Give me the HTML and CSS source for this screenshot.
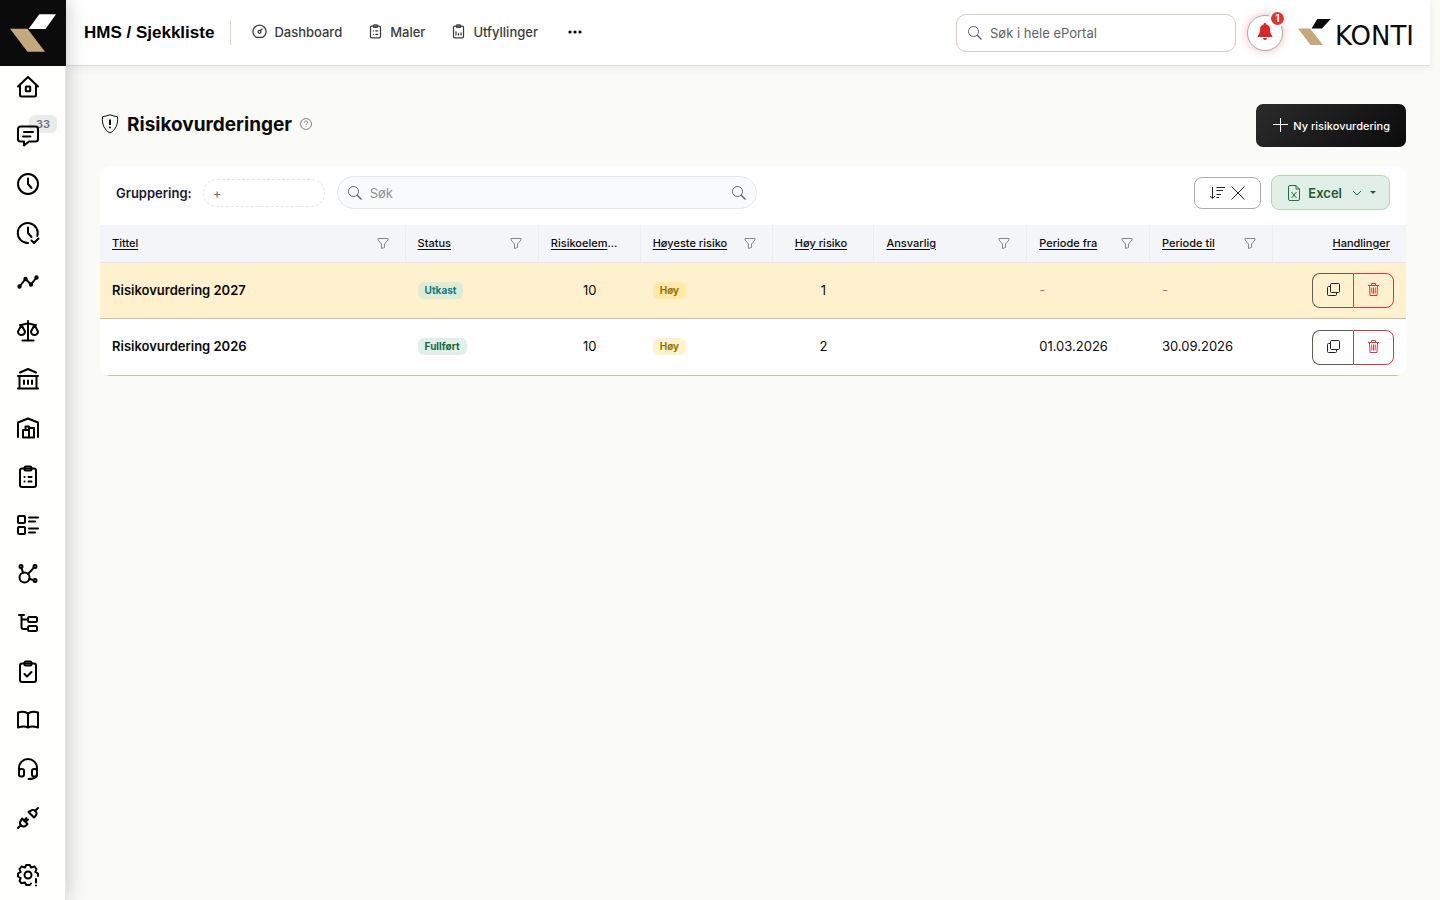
FILE: index.html
```html
<!DOCTYPE html>
<html lang="no">
<head>
  <meta charset="UTF-8">
  <meta name="viewport" content="width=device-width, initial-scale=1">
  <title>Risikovurderinger</title>
  <link rel="stylesheet" href="styles.css">
</head>
<body>
  <!-- shared icons -->
  <svg class="sprite" aria-hidden="true">
    <symbol id="i-search" viewBox="0 0 14 14"><circle cx="5.500" cy="5.500" r="5"/><path d="M9 9l4.500 4.500" stroke-width="1.400"/></symbol>
    <symbol id="i-filter" viewBox="0 0 12 12"><path d="M1 1.500h10v1.500L7.500 7v3.500l-3 1V7L1 3z"/></symbol>
    <symbol id="i-copy" viewBox="0 0 13 13"><rect x="3.500" y=".5" width="9" height="9" rx="1"/><path d="M3.500 3.500h-2a1 1 0 0 0-1 1v7a1 1 0 0 0 1 1h7a1 1 0 0 0 1-1v-2"/></symbol>
    <symbol id="i-trash" viewBox="0 0 13 13"><path d="M1 2.500h11M4.500 2.500v-2h4v2M2.500 2.500l.5 10h7l.5-10M4.700 4.500l.2 6M6.500 4.500v6M8.300 4.500l-.2 6"/></symbol>
    <symbol id="i-clip" viewBox="0 0 24 24"><rect x="4" y="3.500" width="16" height="18.500" rx="2"/><rect x="8.500" y="1.500" width="7" height="4" rx="1.500"/></symbol>
  </svg>

  <aside class="sidebar">
    <a class="brand" href="#" aria-label="Konti">
      <svg viewBox="0 0 66 66"><path fill="#fff" d="M39.300 14.300H56L45.500 29h-17z"/><path fill="#c6a87e" d="M10 28.700h17.500L45 51.700H27.500z"/></svg>
    </a>
    <nav class="side-nav">
      <a href="#" aria-label="Hjem"><svg class="icon" viewBox="0 0 24 24"><path d="M2 11.500 12 2l10 9.500M4 10v10a1.500 1.500 0 0 0 1.500 1.500h13A1.500 1.500 0 0 0 20 20V10"/><rect x="9.800" y="11.500" width="4.400" height="4.800" rx=".5"/></svg></a>
      <a href="#" aria-label="Meldinger"><span class="count">33</span><svg class="icon" viewBox="0 0 24 24"><path d="M4.500 2.500h15A2.500 2.500 0 0 1 22 5v10a2.500 2.500 0 0 1-2.500 2.500H13l-5 4v-4H4.500A2.500 2.500 0 0 1 2 15V5a2.500 2.500 0 0 1 2.500-2.500zM8 8h9M7 12.500h7.500"/></svg></a>
      <a href="#" aria-label="Timer"><svg class="icon" viewBox="0 0 24 24"><circle cx="12" cy="12" r="10"/><path d="M12 6.500V12l3.500 4"/></svg></a>
      <a href="#" aria-label="Godkjenning"><svg class="icon" viewBox="0 0 24 24"><path d="M21.300 15A10 10 0 1 0 12 22M12 6.500V12l3.500 4M15.500 19.500l2.500 2.500 4.500-4.500"/></svg></a>
      <a href="#" aria-label="Statistikk"><svg class="icon" viewBox="0 0 24 24"><path d="M3.500 16.500 9.500 9l5.500 5.500L20.500 7.500"/><g fill="#000"><circle cx="3.500" cy="16.500" r="1.200"/><circle cx="9.500" cy="9" r="1.200"/><circle cx="15" cy="14.500" r="1.200"/><circle cx="20.500" cy="7.500" r="1.200"/></g></svg></a>
      <a href="#" aria-label="Lover"><svg class="icon" viewBox="0 0 24 24"><path d="M12 2v19M6.500 21.500h11M4 6c4 0 5-1.500 8-1.500S16 6 20 6M5.500 6 2 12.500a3.500 3.500 0 0 0 7 0zM18.500 6 15 12.500a3.500 3.500 0 0 0 7 0z"/></svg></a>
      <a href="#" aria-label="Bank"><svg class="icon" viewBox="0 0 24 24"><path d="M4 5.500 12 2l8 3.500M2 9h20M3.500 9v12M20.500 9v12M2 21.500h20M8 13.500V17M12 13.500V17M16 13.500V17"/></svg></a>
      <a href="#" aria-label="Lager"><svg class="icon" viewBox="0 0 24 24"><path d="M2 21V6.500L12 2.500l10 4V21M7 14h6v7.500H7zM13 12h5v9.500h-5M9.500 14v-3.500H13V14"/></svg></a>
      <a href="#" aria-label="Sjekklister"><svg class="icon" viewBox="0 0 24 24"><use href="#i-clip"/><path d="M8.500 12h.1M12.500 12h3M8.500 16.500h.1M12.500 16.500h3"/></svg></a>
      <a href="#" aria-label="Liste"><svg class="icon" viewBox="0 0 24 24"><rect x="2" y="3" width="7" height="7" rx="1"/><rect x="2" y="14" width="7" height="7" rx="1"/><path d="M13 4.500h9M13 8.500h6M13 15.500h9M13 19.500h6"/></svg></a>
      <a href="#" aria-label="Nettverk"><svg class="icon" viewBox="0 0 24 24"><circle cx="8.500" cy="15.500" r="5"/><circle cx="5" cy="4.500" r="1.500"/><circle cx="19" cy="4.500" r="1.500"/><circle cx="19" cy="18.500" r="1.500"/><path d="m5.500 6 1.500 4.500M18 5.500l-6 6.500M13.500 17l4 1"/></svg></a>
      <a href="#" aria-label="Struktur"><svg class="icon" viewBox="0 0 24 24"><path d="M3 4h5M5.500 4v12a2 2 0 0 0 2 2H12M5.500 8.500H12"/><rect x="12" y="6" width="9" height="5" rx="1.500"/><rect x="12" y="15" width="9" height="5" rx="1.500"/></svg></a>
      <a href="#" aria-label="Oppgaver"><svg class="icon" viewBox="0 0 24 24"><use href="#i-clip"/><path d="m8.500 14 2.500 2.500 4.500-4.500"/></svg></a>
      <a href="#" aria-label="Håndbok"><svg class="icon" viewBox="0 0 24 24"><path d="M12 5.500C9 3 5.500 3.500 2 4.500v15c3.500-1 7-1.500 10 0 3-1.500 6.500-1 10 0v-15c-3.500-1-7-1.500-10 1zM12 5.500v14"/></svg></a>
      <a href="#" aria-label="Support"><svg class="icon" viewBox="0 0 24 24"><path d="M3 14v-3a9 9 0 0 1 18 0v6c0 3-3 5-8.500 5"/><rect x="3" y="12" width="5" height="7.500" rx="2"/><rect x="16" y="12" width="5" height="7.500" rx="2"/></svg></a>
      <a href="#" aria-label="Integrasjoner"><svg class="icon" viewBox="0 0 24 24"><path d="M2 22l3-3M6 12.500l5.500 5.500-1.500 1.500a3.500 3.500 0 0 1-5-5zM8 14.500l2.500-2.500M9.500 16l2.500-2.500M22 2l-3 3M12.500 6l5.500 5.500 1.500-1.500a3.500 3.500 0 0 0-5-5z"/></svg></a>
    </nav>
    <a class="side-settings" href="#" aria-label="Innstillinger"><svg class="icon" viewBox="0 0 24 24"><path d="M15 20.500 13.800 22h-3.600L9 19.500l-3.500.8-2-2.500L4.700 15 2 13.500v-3L4.700 9 3.500 6l2-2.500L9 4.500 10.200 2h3.600L15 4.500l3.500-1 2 2.500-1.200 3L22 10.500V13M20 16v3.500M20 22.500v.1"/><circle cx="12" cy="12" r="3.500"/></svg></a>
  </aside>

  <div class="page">
    <header class="topbar">
      <div class="module">HMS / Sjekkliste</div>
      <nav class="top-nav">
        <a href="#"><svg class="icon" viewBox="0 0 24 24"><path d="M7 21.500a10.500 10.500 0 1 1 10 0zM13.500 10.500 16 8"/><circle cx="12" cy="12.500" r="2.300"/></svg>Dashboard</a>
        <a href="#"><svg class="icon" viewBox="0 0 24 24"><use href="#i-clip"/><path d="M8.500 11h.1M12.500 11h3M8.500 16.500h.1M12.500 16.500h3"/></svg>Maler</a>
        <a href="#"><svg class="icon" viewBox="0 0 24 24"><use href="#i-clip"/><path d="M8 12.500v5M12 15v2.500M16 14v3.500"/></svg>Utfyllinger</a>
      </nav>
      <button class="more" type="button" aria-label="Mer"><svg viewBox="0 0 16 4"><circle cx="3" cy="2" r="1.600"/><circle cx="8" cy="2" r="1.600"/><circle cx="13" cy="2" r="1.600"/></svg></button>
      <div class="global-search">
        <svg class="thin"><use href="#i-search"/></svg>
        <input type="search" placeholder="Søk i hele ePortal" aria-label="Søk i hele ePortal">
      </div>
      <button class="bell" type="button" aria-label="Varsler">
        <svg viewBox="0 0 16 18"><path d="M8 0a1.300 1.300 0 0 1 1.300 1.400A5 5 0 0 1 13 6.300c0 4 1 5.200 2.300 6.700v1H.7v-1C2 11.500 3 10.300 3 6.300a5 5 0 0 1 3.700-4.900A1.300 1.300 0 0 1 8 0zM6 15h4a2 2 0 0 1-4 0z"/></svg>
        <span class="bell-count">1</span>
      </button>
      <a class="logo" href="#">
        <svg viewBox="0 0 33 26"><path fill="#0b0b0b" d="M19.300 0h13.400L24 9.500H13.500z"/><path fill="#c6a87e" d="M0 9.500h12L25 26H12.500z"/></svg>
        <span>KONTI</span>
      </a>
    </header>

    <main class="content">
      <div class="heading">
        <svg class="shield" viewBox="0 0 18 20"><path d="M9 .8c2.500.9 5 1.500 7.500 1.900C17.300 10 14.800 16 9 19 3.200 16 .7 10 1.500 2.700 4 2.300 6.500 1.700 9 .8z"/><path class="mark" d="M9 5.500V11M9 12.700v1.600"/></svg>
        <h1>Risikovurderinger</h1>
        <svg class="help" viewBox="0 0 16 16"><circle cx="8" cy="8" r="7.300"/><path d="M5.800 6.200C5.900 3.300 10.300 3.500 10.200 6c0 1.500-2.200 1.700-2.200 3.500M8 11.300v.8"/></svg>
        <button class="btn-new" type="button"><svg viewBox="0 0 16 16"><path d="M8.500 0v14M1 6.500h15"/></svg>Ny risikovurdering</button>
      </div>

      <section class="card">
        <div class="toolbar">
          <span class="group-label">Gruppering:</span>
          <button class="group-drop" type="button">+</button>
          <div class="table-search">
            <svg class="thin"><use href="#i-search"/></svg>
            <input type="search" placeholder="Søk" aria-label="Søk">
            <svg class="thin"><use href="#i-search"/></svg>
          </div>
          <button class="btn-sort" type="button" aria-label="Nullstill sortering">
            <svg viewBox="0 0 16 16"><path d="M3.500 2v11.500M1 11l2.500 2.500L6 11M7.500 2.500H16M7.500 5.500H14M7.500 9.500H12M7.500 12.500H10"/></svg>
            <svg viewBox="0 0 16 16"><path d="M1.500 1.500l13 13M14.500 1.500l-13 13"/></svg>
          </button>
          <button class="btn-excel" type="button">
            <svg viewBox="0 0 12 16"><path d="M2 .5h6l3.500 3.500v10a1.500 1.500 0 0 1-1.500 1.500H2A1.500 1.500 0 0 1 .5 14V2A1.500 1.500 0 0 1 2 .5zM8 .5V4h3.500M3.500 7l5 6M8.500 7l-5 6"/></svg>
            Excel
            <svg class="chevron" viewBox="0 0 10 10"><path d="M1 3l4 4 4-4"/></svg>
            <span class="caret"></span>
          </button>
        </div>

        <table>
          <colgroup>
            <col class="c-title"><col class="c-status"><col class="c-num"><col class="c-level"><col class="c-num"><col class="c-owner"><col class="c-date"><col class="c-date"><col class="c-actions">
          </colgroup>
          <thead>
            <tr>
              <th><div><a href="#">Tittel</a><svg class="filter"><use href="#i-filter"/></svg></div></th>
              <th><div><a href="#">Status</a><svg class="filter"><use href="#i-filter"/></svg></div></th>
              <th><div><a href="#">Risikoelem</a>...</div></th>
              <th><div><a href="#">Høyeste risiko</a><svg class="filter"><use href="#i-filter"/></svg></div></th>
              <th><div class="center"><a href="#">Høy risiko</a></div></th>
              <th><div><a href="#">Ansvarlig</a><svg class="filter"><use href="#i-filter"/></svg></div></th>
              <th><div><a href="#">Periode fra</a><svg class="filter"><use href="#i-filter"/></svg></div></th>
              <th><div><a href="#">Periode til</a><svg class="filter"><use href="#i-filter"/></svg></div></th>
              <th><div class="end"><a href="#">Handlinger</a></div></th>
            </tr>
          </thead>
          <tbody>
            <tr class="selected">
              <td class="name">Risikovurdering 2027</td>
              <td><span class="badge info">Utkast</span></td>
              <td class="num">10</td>
              <td><span class="badge warn">Høy</span></td>
              <td class="num">1</td>
              <td></td>
              <td class="muted">-</td>
              <td class="muted">-</td>
              <td class="actions"><div class="btn-group"><button type="button" aria-label="Kopier"><svg><use href="#i-copy"/></svg></button><button class="danger" type="button" aria-label="Slett"><svg><use href="#i-trash"/></svg></button></div></td>
            </tr>
            <tr>
              <td class="name">Risikovurdering 2026</td>
              <td><span class="badge success">Fullført</span></td>
              <td class="num">10</td>
              <td><span class="badge warn">Høy</span></td>
              <td class="num">2</td>
              <td></td>
              <td>01.03.2026</td>
              <td>30.09.2026</td>
              <td class="actions"><div class="btn-group"><button type="button" aria-label="Kopier"><svg><use href="#i-copy"/></svg></button><button class="danger" type="button" aria-label="Slett"><svg><use href="#i-trash"/></svg></button></div></td>
            </tr>
          </tbody>
        </table>
      </section>
    </main>
  </div>
</body>
</html>
```
FILE: styles.css
```css
* {
  box-sizing: border-box;
}

body {
  margin: 0;
  min-height: 100vh;
  display: flex;
  font-family: Inter, "Liberation Sans", sans-serif;
  font-size: 13px;
  color: #0b0b0b;
  background: #fafaf6;
}

a {
  color: inherit;
  text-decoration: none;
}

button,
input {
  font: inherit;
  color: inherit;
}

button {
  cursor: pointer;
}

svg {
  flex: none;
}

.sprite {
  position: absolute;
  width: 0;
  height: 0;
}

.icon {
  display: block;
  width: 24px;
  height: 24px;
  fill: none;
  stroke: currentColor;
  stroke-width: 2;
  stroke-linecap: round;
  stroke-linejoin: round;
}

.thin {
  width: 14px;
  height: 14px;
  fill: none;
  stroke: #5c6370;
  stroke-width: 1;
}

/* sidebar */
.sidebar {
  position: relative;
  z-index: 2;
  flex: none;
  width: 66px;
  display: flex;
  flex-direction: column;
  background: #fefefd;
  border-right: 1px solid #e6e6e4;
  box-shadow: 0 0 20px rgba(0, 0, 0, 0.24);
  color: #000;
}

.brand {
  width: 66px;
  height: 66px;
  background: #0b0b0b;
}

.brand svg {
  display: block;
}

.side-nav {
  flex: 1;
  display: flex;
  flex-direction: column;
  justify-content: space-between;
  padding: 9px 16px 0;
}

.side-nav a {
  position: relative;
}

.side-nav .icon {
  position: relative;
}

.count {
  position: absolute;
  left: 13px;
  top: -9px;
  padding: 0 7px;
  border-radius: 6px;
  background: #ebebec;
  color: #6c757d;
  font-size: 11px;
  line-height: 18px;
  font-weight: 600;
}

.side-settings {
  padding: 33px 16px 13px;
}

/* top bar */
.page {
  flex: 1;
  min-width: 0;
}

.topbar {
  height: 66px;
  margin-right: 10px;
  padding: 0 16px 0 18px;
  display: flex;
  align-items: center;
  background: #fff;
  border-bottom: 1px solid #dddedf;
  box-shadow: 0 2px 8px rgba(0, 0, 0, 0.06);
}

.module {
  padding-right: 16px;
  border-right: 1px solid #d9d5cc;
  font-family: "Liberation Sans", Arial, sans-serif;
  font-size: 17px;
  line-height: 24px;
  font-weight: 700;
  color: #000;
}

.top-nav {
  display: flex;
  gap: 26px;
  padding: 0 0 2px 21px;
}

.top-nav a {
  display: flex;
  align-items: center;
  gap: 7px;
  color: #3c3c3c;
  font-size: 13px;
  font-weight: 500;
}

.top-nav .icon {
  width: 15px;
  height: 15px;
}

.more {
  margin-left: 29px;
  padding: 0 0 2px;
  border: 0;
  background: none;
}

.more svg {
  display: block;
  width: 16px;
  height: 4px;
}

.global-search {
  width: 280px;
  height: 38px;
  margin-left: auto;
  padding: 0 11px;
  display: flex;
  align-items: center;
  gap: 8px;
  border: 1px solid #d5cec3;
  border-radius: 10px;
}

input {
  flex: 1;
  min-width: 0;
  padding: 0;
  border: 0;
  outline: 0;
  background: none;
}

.global-search input::placeholder {
  color: #5f6368;
  opacity: 1;
}

.bell {
  position: relative;
  width: 36px;
  height: 36px;
  margin: 0 15px 0 11px;
  padding: 0 0 2px;
  display: grid;
  place-items: center;
  border: 1px solid #a9a9ad;
  border-radius: 50%;
  background: #fff;
  box-shadow: 0 0 8px rgba(229, 57, 53, 0.35);
}

.bell svg {
  width: 16px;
  height: 18px;
  fill: #dc2626;
}

.bell-count {
  position: absolute;
  top: -6px;
  right: -4px;
  width: 17px;
  height: 17px;
  border: 2px solid #fff;
  border-radius: 50%;
  background: #e03535;
  color: #fff;
  font-size: 10px;
  line-height: 13px;
  font-weight: 700;
}

.logo {
  width: 116px;
  display: flex;
  align-items: flex-end;
  justify-content: space-between;
}

.logo svg {
  width: 33px;
  height: 26px;
  margin-bottom: 2px;
}

.logo span {
  margin-left: -4px;
  font-family: "DejaVu Sans", sans-serif;
  font-size: 26px;
  line-height: 22px;
}

/* page content */
.content {
  padding: 38px 34px;
}

.heading {
  display: flex;
  align-items: center;
  margin-bottom: 19px;
}

.shield {
  width: 18px;
  height: 20px;
  margin: 0 8px 3px 1px;
  fill: none;
  stroke: #0b0b0b;
  stroke-width: 1;
}

.shield .mark {
  stroke-width: 2;
}

h1 {
  margin: 0 0 2px;
  font-size: 19px;
  line-height: 24px;
  font-weight: 700;
}

.help {
  width: 12px;
  height: 12px;
  margin: 0 0 3px 8px;
  fill: none;
  stroke: #555;
  stroke-width: 1;
}

.btn-new {
  height: 43px;
  margin-left: auto;
  padding: 0 16px;
  display: flex;
  align-items: center;
  gap: 5px;
  border: 0;
  border-radius: 7px;
  background: linear-gradient(135deg, #2b2b2b, #0b0b0b);
  color: #fff;
  font-size: 11px;
  font-weight: 500;
}

.btn-new svg {
  width: 16px;
  height: 16px;
  stroke: #fff;
}

.card {
  overflow: hidden;
  border-radius: 10px;
  background: #fff;
}

.toolbar {
  height: 59px;
  padding: 0 16px 6px;
  display: flex;
  align-items: center;
}

.group-label {
  color: #1a1a2e;
  font-weight: 600;
}

.group-drop {
  width: 122px;
  height: 28px;
  margin: 0 12px 0 11px;
  padding: 0 9px;
  border: 1px dashed #e3e5e8;
  border-radius: 14px;
  background: none;
  color: #6b6b6b;
  text-align: left;
}

.table-search {
  width: 420px;
  height: 33px;
  padding: 0 10px;
  display: flex;
  align-items: center;
  gap: 8px;
  border: 1px solid #e3e6ea;
  border-radius: 17px;
  background: #f8fafc;
}

.table-search input::placeholder {
  color: #8d9196;
  opacity: 1;
}

.btn-sort {
  height: 32px;
  margin-left: auto;
  padding: 0 14px;
  display: flex;
  align-items: center;
  gap: 5px;
  border: 1px solid #adadb2;
  border-radius: 8px;
  background: #fff;
}

.btn-sort svg {
  width: 16px;
  height: 16px;
  fill: none;
  stroke: #212529;
  stroke-width: 1;
}

.btn-excel {
  height: 35px;
  margin-left: 10px;
  padding: 0 13px 0 16px;
  display: flex;
  align-items: center;
  gap: 8px;
  border: 1px solid #b3d8b4;
  border-radius: 8px;
  background: #e1efe8;
  color: #1f5c2c;
  font-weight: 600;
}

.btn-excel svg {
  width: 12px;
  height: 16px;
  fill: none;
  stroke: #1d7040;
  stroke-width: 1;
}

.btn-excel .chevron {
  width: 10px;
  height: 10px;
  margin-left: 2px;
}

.caret {
  border: 3px solid transparent;
  border-top-color: #1f5c2c;
  border-bottom: 0;
}

/* table */
table {
  width: 100%;
  table-layout: fixed;
  border-collapse: separate;
  border-spacing: 0;
}

.c-title { width: 23.4%; }
.c-status { width: 10.2%; }
.c-num { width: 7.8%; }
.c-level { width: 10.1%; }
.c-owner { width: 11.7%; }
.c-date { width: 9.4%; }
.c-actions { width: 10.2%; }

th {
  height: 38px;
  padding: 0 16px 2px 12px;
  background: #f4f5f8;
  border-right: 1px solid #ebedf0;
  border-bottom: 1px solid #e3e6ea;
  font-size: 11px;
  font-weight: 500;
  text-align: left;
  white-space: nowrap;
}

th:last-child {
  border-right: 0;
}

th div {
  display: flex;
  align-items: center;
}

th a {
  text-decoration: underline;
  text-underline-offset: 2px;
}

.center {
  justify-content: center;
}

.end {
  justify-content: flex-end;
}

.filter {
  width: 12px;
  height: 12px;
  margin-left: auto;
  fill: none;
  stroke: #85858c;
  stroke-width: 1;
}

td {
  height: 56px;
  padding: 0 12px 2px;
  border-bottom: 1px solid #c9c0a0;
}

tr:last-child td {
  height: 57px;
}

.selected td {
  background: #fff1cd;
}

.actions {
  padding-bottom: 0;
}

.name {
  font-weight: 600;
}

.num {
  text-align: center;
}

.muted {
  color: #8b8b83;
}

.badge {
  display: inline-block;
  padding: 0 7px;
  border-radius: 6px;
  font-size: 10px;
  line-height: 17px;
  font-weight: 700;
}

.info {
  background: #dfecd2;
  color: #0f7c8c;
}

.success {
  background: #e1efe8;
  color: #146c43;
}

.warn {
  background: #fff3cd;
  color: #997404;
}

.selected .warn {
  background: #ffe8a8;
}

.btn-group {
  display: flex;
  justify-content: flex-end;
}

.btn-group button {
  width: 41px;
  height: 35px;
  padding: 0 0 2px;
  display: grid;
  place-items: center;
  border: 1px solid #625d55;
  border-right: 0;
  border-radius: 8px 0 0 8px;
  background: none;
}

.btn-group .danger {
  border: 1px solid #dc3545;
  border-radius: 0 8px 8px 0;
}

.btn-group svg {
  width: 13px;
  height: 13px;
  fill: none;
  stroke: #212529;
  stroke-width: 1;
}

.btn-group .danger svg {
  stroke: #dc3545;
}
```
